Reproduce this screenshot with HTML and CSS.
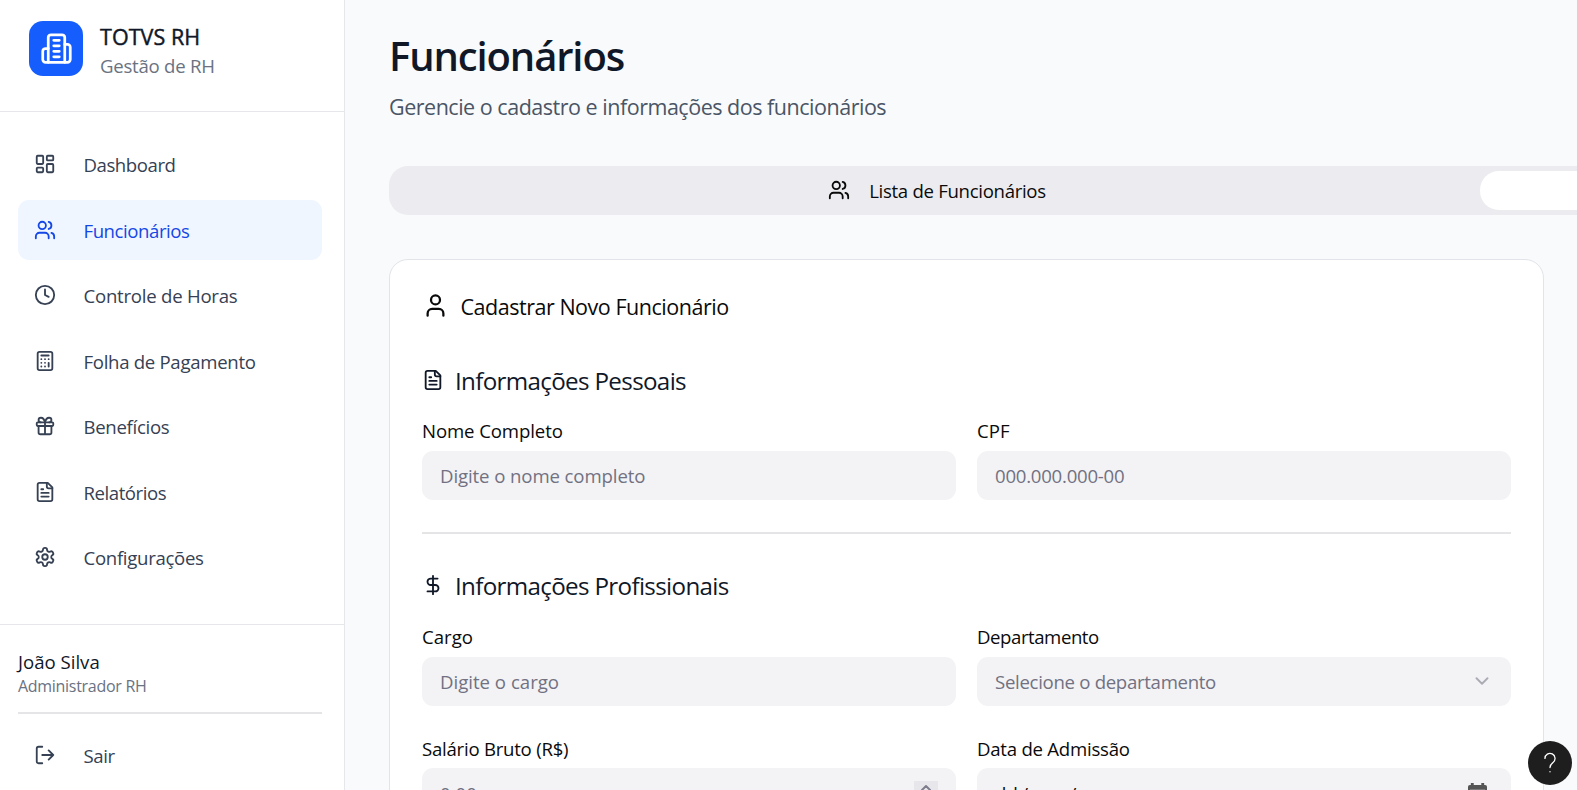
FILE: index.html
```html
<!DOCTYPE html>
<html lang="pt-BR">
<head>
<meta charset="utf-8">
<title>TOTVS RH</title>
<link rel="stylesheet" href="styles.css">
</head>
<body>
<svg class="defs" width="0" height="0">
<symbol id="users" viewBox="0 0 24 24"><path d="M16 21v-2a4 4 0 0 0-4-4H6a4 4 0 0 0-4 4v2"/><circle cx="9" cy="7" r="4"/><path d="M22 21v-2a4 4 0 0 0-3-3.87M16 3.13a4 4 0 0 1 0 7.75"/></symbol>
<symbol id="file" viewBox="0 0 24 24"><path d="M15 2H6a2 2 0 0 0-2 2v16a2 2 0 0 0 2 2h12a2 2 0 0 0 2-2V7Z"/><path d="M14 2v4a2 2 0 0 0 2 2h4M10 9H8M16 13H8M16 17H8"/></symbol>
</svg>
<div class="app">
<aside class="sidebar">
  <header class="brand">
    <div class="logo"><svg class="icon" viewBox="0 0 24 24"><path d="M6 22V4a2 2 0 0 1 2-2h8a2 2 0 0 1 2 2v18Z"/><path d="M6 12H4a2 2 0 0 0-2 2v6a2 2 0 0 0 2 2h2M18 9h2a2 2 0 0 1 2 2v9a2 2 0 0 1-2 2h-2M10 6h4M10 10h4M10 14h4M10 18h4"/></svg></div>
    <div><div class="brand-name">TOTVS RH</div><div class="brand-sub">Gestão de RH</div></div>
  </header>
  <nav class="nav">
    <a class="item"><svg class="icon" viewBox="0 0 24 24"><rect width="7" height="9" x="3" y="3" rx="1"/><rect width="7" height="5" x="14" y="3" rx="1"/><rect width="7" height="9" x="14" y="12" rx="1"/><rect width="7" height="5" x="3" y="16" rx="1"/></svg><span class="tight-4">Dashboard</span></a>
    <a class="item active"><svg class="icon"><use href="#users"/></svg><span class="tight-4">Funcionários</span></a>
    <a class="item"><svg class="icon" viewBox="0 0 24 24"><circle cx="12" cy="12" r="10"/><path d="M12 6v6l4 2"/></svg><span class="tight-2">Controle de Horas</span></a>
    <a class="item"><svg class="icon" viewBox="0 0 24 24"><rect width="16" height="20" x="4" y="2" rx="2"/><path d="M8 6h8M16 14v4M16 10h.01M12 10h.01M8 10h.01M12 14h.01M8 14h.01M12 18h.01M8 18h.01"/></svg><span class="tight-3">Folha de Pagamento</span></a>
    <a class="item"><svg class="icon" viewBox="0 0 24 24"><rect x="3" y="8" width="18" height="4" rx="1"/><path d="M12 8v13M19 12v7a2 2 0 0 1-2 2H7a2 2 0 0 1-2-2v-7M7.5 8a2.5 2.5 0 0 1 0-5A4.8 8 0 0 1 12 8a4.8 8 0 0 1 4.5-5 2.5 2.5 0 0 1 0 5"/></svg><span class="tight-3">Benefícios</span></a>
    <a class="item"><svg class="icon"><use href="#file"/></svg><span class="tight-4">Relatórios</span></a>
    <a class="item"><svg class="icon" viewBox="0 0 24 24"><path d="M12.22 2h-.44a2 2 0 0 0-2 2v.18a2 2 0 0 1-1 1.73l-.43.25a2 2 0 0 1-2 0l-.15-.08a2 2 0 0 0-2.73.73l-.22.38a2 2 0 0 0 .73 2.73l.15.1a2 2 0 0 1 1 1.72v.51a2 2 0 0 1-1 1.74l-.15.09a2 2 0 0 0-.73 2.73l.22.38a2 2 0 0 0 2.73.73l.15-.08a2 2 0 0 1 2 0l.43.25a2 2 0 0 1 1 1.73V20a2 2 0 0 0 2 2h.44a2 2 0 0 0 2-2v-.18a2 2 0 0 1 1-1.73l.43-.25a2 2 0 0 1 2 0l.15.08a2 2 0 0 0 2.73-.73l.22-.39a2 2 0 0 0-.73-2.73l-.15-.08a2 2 0 0 1-1-1.74v-.5a2 2 0 0 1 1-1.74l.15-.09a2 2 0 0 0 .73-2.73l-.22-.38a2 2 0 0 0-2.73-.73l-.15.08a2 2 0 0 1-2 0l-.43-.25a2 2 0 0 1-1-1.73V4a2 2 0 0 0-2-2z"/><circle cx="12" cy="12" r="3"/></svg><span class="tight-3">Configurações</span></a>
  </nav>
  <footer class="account">
    <div class="user">João Silva</div>
    <div class="role">Administrador RH</div>
    <div class="rule"></div>
    <a class="item logout"><svg class="icon" viewBox="0 0 24 24"><path d="M9 21H5a2 2 0 0 1-2-2V5a2 2 0 0 1 2-2h4M16 17l5-5-5-5M21 12H9"/></svg><span class="tight-4">Sair</span></a>
  </footer>
</aside>
<main class="main">
  <h1 class="title">Funcionários</h1>
  <p class="subtitle">Gerencie o cadastro e informações dos funcionários</p>
  <div class="tabs">
    <div class="tab"><svg class="icon"><use href="#users"/></svg><span class="tight-3">Lista de Funcionários</span></div>
    <div class="tab tab-on"></div>
  </div>
  <section class="card">
    <h2 class="card-title"><svg class="icon" viewBox="0 0 24 24"><path d="M19 21v-2a4 4 0 0 0-4-4H9a4 4 0 0 0-4 4v2"/><circle cx="12" cy="7" r="4"/></svg><span>Cadastrar Novo Funcionário</span></h2>
    <h3 class="section-title first"><svg class="icon"><use href="#file"/></svg><span>Informações Pessoais</span></h3>
    <div class="grid">
      <div><label class="label tight-1">Nome Completo</label><div class="field"><span class="tight-1">Digite o nome completo</span></div></div>
      <div><label class="label">CPF</label><div class="field"><span class="tight-2">000.000.000-00</span></div></div>
    </div>
    <div class="rule card-rule"></div>
    <h3 class="section-title"><svg class="icon" viewBox="0 0 24 24"><path d="M12 2v20M17 5H9.500a3.500 3.500 0 0 0 0 7h5a3.500 3.500 0 0 1 0 7H6"/></svg><span>Informações Profissionais</span></h3>
    <div class="grid job">
      <div><label class="label">Cargo</label><div class="field"><span>Digite o cargo</span></div></div>
      <div><label class="label tight-4">Departamento</label><div class="field"><span class="tight-3">Selecione o departamento</span><svg class="icon chevron" viewBox="0 0 24 24"><path d="m6 9 6 6 6-6"/></svg></div></div>
      <div><label class="label low tight-2">Salário Bruto (R$)</label><div class="field"><span class="number">0.00</span><div class="spinner"><svg class="icon" viewBox="0 0 24 12"><path d="m8 9 4-4 4 4"/></svg></div></div></div>
      <div><label class="label low tight-2">Data de Admissão</label><div class="field date"><span class="date-parts"><span>dd</span><span>/</span><span>mm</span><span>/</span><span>aaaa</span></span><svg class="cal" viewBox="0 0 20 20"><path d="M3 0h3v2h8V0h3v2h1a2 2 0 0 1 2 2v14a2 2 0 0 1-2 2H2a2 2 0 0 1-2-2V4a2 2 0 0 1 2-2h1zM2 7v11h16V7z"/></svg></div></div>
    </div>
  </section>
</main>
</div>
<button class="help"><svg class="icon" viewBox="0 0 24 24"><path d="M6.500 7a5.500 5.500 0 1 1 8.800 4.400C13 13.200 12 14 12 17"/><path d="M12 21.400v.2"/></svg></button>
</body>
</html>
```
FILE: styles.css
```css
*{box-sizing:border-box}
body{margin:0;height:790px;overflow:hidden;background:#f9fafb;font:18.6px/20px "Open Sans","Noto Sans",sans-serif;color:#0a0a0a}
.defs{position:absolute}
h1,h2,h3,p{margin:0;font-weight:400}
.icon{width:22px;height:22px;flex:none;fill:none;stroke:currentColor;stroke-width:2;stroke-linecap:round;stroke-linejoin:round}
span{white-space:nowrap}

/* tracking steps */
.tight-1{letter-spacing:-.1px}
.tight-2{letter-spacing:-.24px}
.tight-3{letter-spacing:-.3px}
.tight-4{letter-spacing:-.44px}

.app{display:flex;height:790px}
.sidebar{width:345px;flex:none;background:#fff;border-right:1px solid #e5e7eb;display:flex;flex-direction:column}
.brand{height:112px;border-bottom:1px solid #e5e7eb;padding:21px 0 0 29px;display:flex;gap:17px;flex:none}
.logo{width:54px;height:55px;border-radius:14px;background:#155dfc;color:#fff;display:flex;align-items:center;justify-content:center}
.logo .icon{width:33px;height:33px}
.brand-name{font-size:21.500px;color:#101828;line-height:32px;letter-spacing:.06px;-webkit-text-stroke:.45px #101828}
.brand-sub{color:#6a7282;line-height:26px;letter-spacing:-.25px}
.nav{padding:22.800px 22px 0 18px;display:flex;flex-direction:column;gap:5.500px;flex:1}
.item{height:60px;border-radius:11px;display:flex;align-items:center;padding-left:16px;gap:27.500px;color:#364153}
.nav .item:nth-child(even){padding-top:1px}
.item .icon{margin-top:-2px}
.active{background:#eff6ff;color:#1447e6}
.account{height:166px;border-top:1px solid #e5e7eb;padding:25px 22px 0 18px;flex:none}
.user{color:#101828;line-height:24px}
.role{font-size:16px;color:#6a7282;line-height:24px;letter-spacing:-.29px}
.rule{height:2px;background:#e5e5e7}
.account .rule{margin-top:14px;margin-bottom:12px}

.main{flex:1;min-width:0;padding:28.500px 33px 0 44px;overflow:hidden}
.title{font-size:40px;font-weight:600;line-height:54px;color:#101828;letter-spacing:-1.12px}
.subtitle{font-size:21.500px;line-height:32px;margin-top:8px;color:#4a5565;letter-spacing:-.48px}
.tabs{margin-top:43.500px;width:2189px;height:49px;border-radius:19px;background:#ececf0;padding:5px;display:flex}
.tab{width:1086px;border-radius:19px;display:flex;align-items:center;justify-content:center;gap:19px}
.tab .icon{margin-top:-2px}
.tab-on{background:#fff}

.card{margin-top:44px;height:700px;border:1px solid #e2e4e9;border-radius:19px;background:#fff;padding:32px}
.card-title{font-size:21.500px;line-height:30px;letter-spacing:-.47px;display:flex;align-items:center;gap:11.500px}
.card-title .icon{width:27px;height:27px;margin-top:-4px}
.section-title{font-size:24.200px;line-height:36px;letter-spacing:-.67px;color:#101828;display:flex;align-items:center;gap:11px}
.section-title .icon{margin-top:-2px}
.first{margin-top:41px}
.grid{display:grid;grid-template-columns:1fr 1fr;column-gap:21px;row-gap:32px;margin-top:22px}
.job{margin-top:23px}
.label{display:block;line-height:20px;margin-bottom:10px}
.low{padding-top:1px;margin-bottom:9px}
.field{height:49px;border-radius:11px;background:#f3f3f5;color:#717182;display:flex;align-items:center;justify-content:space-between;padding:0 18px}
.chevron{opacity:.55;margin-top:-2px}
.card-rule{margin:32px 0 34px}
.date{color:#0a0a0a;padding-right:24px}
.date-parts{display:flex;gap:3.500px;padding-top:3px}
.number{padding-top:2px}
.cal{width:19px;height:21px;fill:#555}
.spinner{width:24px;height:24px;background:#e6e6ea;opacity:.9}
.spinner .icon{width:24px;height:12px;display:block}
.help{position:absolute;left:1528px;top:741px;width:44px;height:44px;border:0;border-radius:50%;background:#1e1e1e;color:#fff;padding:0;display:flex;align-items:center;justify-content:center}
.help .icon{stroke-width:1.400}
```
